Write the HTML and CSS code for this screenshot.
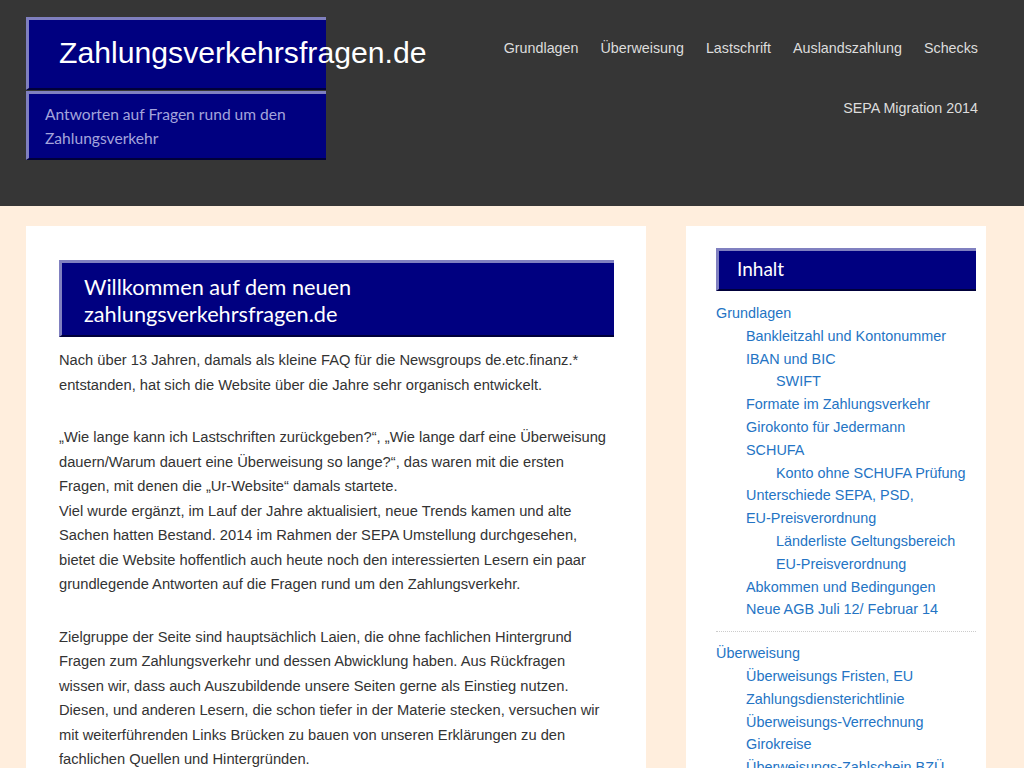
FILE: index.html
```html
<!DOCTYPE html>
<html lang="de">
<head>
<meta charset="utf-8">
<title>Zahlungsverkehrsfragen.de</title>
<link rel="stylesheet" href="styles.css">
</head>
<body>
<header class="site-header">
  <div class="header-inner">
    <div class="branding">
      <div class="title-box"><a class="site-title" href="#">Zahlungsverkehrsfragen.de</a></div>
      <div class="desc-box">Antworten auf Fragen rund um den Zahlungsverkehr</div>
    </div>
    <nav class="main-nav">
      <ul>
        <li><a href="#">Grundlagen</a></li>
        <li><a href="#">Überweisung</a></li>
        <li><a href="#">Lastschrift</a></li>
        <li><a href="#">Auslandszahlung</a></li>
        <li><a href="#">Schecks</a></li>
        <li><a href="#">SEPA Migration 2014</a></li>
      </ul>
    </nav>
  </div>
</header>
<div class="site-content">
  <main class="main-card">
    <h1 class="box-heading page-title">Willkommen auf dem neuen zahlungsverkehrsfragen.de</h1>
    <p>Nach über 13 Jahren, damals als kleine FAQ für die Newsgroups de.etc.finanz.* entstanden, hat sich die Website über die Jahre sehr organisch entwickelt.</p>
    <p>„Wie lange kann ich Lastschriften zurückgeben?“, „Wie lange darf eine Überweisung dauern/Warum dauert eine Überweisung so lange?“, das waren mit die ersten Fragen, mit denen die „Ur-Website“ damals startete.<br>Viel wurde ergänzt, im Lauf der Jahre aktualisiert, neue Trends kamen und alte Sachen hatten Bestand. 2014 im Rahmen der SEPA Umstellung durchgesehen, bietet die Website hoffentlich auch heute noch den interessierten Lesern ein paar grundlegende Antworten auf die Fragen rund um den Zahlungsverkehr.</p>
    <p>Zielgruppe der Seite sind hauptsächlich Laien, die ohne fachlichen Hintergrund Fragen zum Zahlungsverkehr und dessen Abwicklung haben. Aus Rückfragen wissen wir, dass auch Auszubildende unsere Seiten gerne als Einstieg nutzen. Diesen, und anderen Lesern, die schon tiefer in der Materie stecken, versuchen wir mit weiterführenden Links Brücken zu bauen von unseren Erklärungen zu den fachlichen Quellen und Hintergründen.</p>
    <p>Viel Spaß beim Lesen!</p>
  </main>
  <aside class="side-card">
    <h2 class="box-heading widget-title">Inhalt</h2>
    <ul class="toc">
      <li><a href="#">Grundlagen</a>
        <ul>
          <li><a href="#">Bankleitzahl und Kontonummer</a></li>
          <li><a href="#">IBAN und BIC</a>
            <ul><li><a href="#">SWIFT</a></li></ul>
          </li>
          <li><a href="#">Formate im Zahlungsverkehr</a></li>
          <li><a href="#">Girokonto für Jedermann</a></li>
          <li><a href="#">SCHUFA</a>
            <ul><li><a href="#">Konto ohne SCHUFA Prüfung</a></li></ul>
          </li>
          <li><a href="#">Unterschiede SEPA, PSD, <span class="nowrap">EU-Preisverordnung</span></a>
            <ul>
              <li><a href="#">Länderliste Geltungsbereich</a></li>
              <li><a href="#">EU-Preisverordnung</a></li>
            </ul>
          </li>
          <li><a href="#">Abkommen und Bedingungen</a></li>
          <li><a href="#">Neue AGB Juli 12/ Februar 14</a></li>
        </ul>
      </li>
      <li><a href="#">Überweisung</a>
        <ul>
          <li><a href="#">Überweisungs Fristen, EU Zahlungsdiensterichtlinie</a></li>
          <li><a href="#">Überweisungs-Verrechnung</a></li>
          <li><a href="#">Girokreise</a></li>
          <li><a href="#">Überweisungs-Zahlschein BZÜ</a></li>
          <li><a href="#">SEPA-Überweisung</a></li>
        </ul>
      </li>
    </ul>
  </aside>
</div>
</body>
</html>
```
FILE: styles.css
```css
* { box-sizing: border-box; }
html, body { margin: 0; padding: 0; }
body {
  background: #ffeedd;
  font-family: "Liberation Sans", Arial, sans-serif;
  color: #333333;
  font-size: 14.4px;
}
a { text-decoration: none; }
ul { list-style: none; margin: 0; padding: 0; }
.nowrap { white-space: nowrap; }

.site-header {
  background: #363636;
  height: 206px;
}
.header-inner {
  width: 1011px;
  padding: 17px 33px 0 26px;
  display: flex;
  justify-content: space-between;
  align-items: flex-start;
}
.branding { width: 300px; }
.title-box, .desc-box, .box-heading {
  background: #000080;
  border-top: 3px solid #8080c0;
  border-left: 3px solid #8080c0;
  border-bottom: 2px solid #00003a;
}
.title-box {
  padding: 16px 0 18px 30px;
  white-space: nowrap;
}
.site-title {
  color: #ffffff;
  font-size: 30.2px;
  line-height: 34px;
}
.desc-box {
  margin-top: 1px;
  padding: 8px 20px 8px 16px;
  font-family: Lato, "Liberation Sans", sans-serif;
  font-size: 15.6px;
  line-height: 24px;
  color: #a4a4dc;
}

.main-nav { width: 520px; }
.main-nav ul {
  display: flex;
  flex-wrap: wrap;
  justify-content: flex-end;
}
.main-nav li { margin-left: 22px; }
.main-nav a {
  display: block;
  color: #dddddd;
  font-size: 14.3px;
  line-height: 24px;
  padding: 19px 0 17px;
}

.site-content {
  width: 1011px;
  display: flex;
  align-items: flex-start;
  gap: 40px;
  padding: 20px 25px 0 26px;
}
.main-card {
  flex: 0 0 620px;
  background: #ffffff;
  padding: 34px 32px 40px 33px;
  min-height: 600px;
}
.box-heading {
  margin: 0;
  color: #ffffff;
  font-family: Lato, "Liberation Sans", sans-serif;
  font-weight: normal;
}
.page-title {
  font-size: 21.7px;
  line-height: 27px;
  padding: 11px 120px 7px 22px;
}
.main-card p {
  margin: 11px 0 28px;
  font-size: 14.7px;
  line-height: 24.5px;
}

.side-card {
  flex: 0 0 300px;
  background: #ffffff;
  padding: 22px 10px 30px 30px;
}
.widget-title {
  font-size: 19px;
  line-height: 24px;
  padding: 6px 10px 8px 18px;
}
.toc { margin-top: 11px; }
.toc > li {
  padding-bottom: 10px;
  margin-bottom: 10px;
  border-bottom: 1px dotted #cccccc;
}
.toc ul { padding-left: 30px; }
.toc a { color: #2474c4; }
.toc li { line-height: 22.8px; }
```
